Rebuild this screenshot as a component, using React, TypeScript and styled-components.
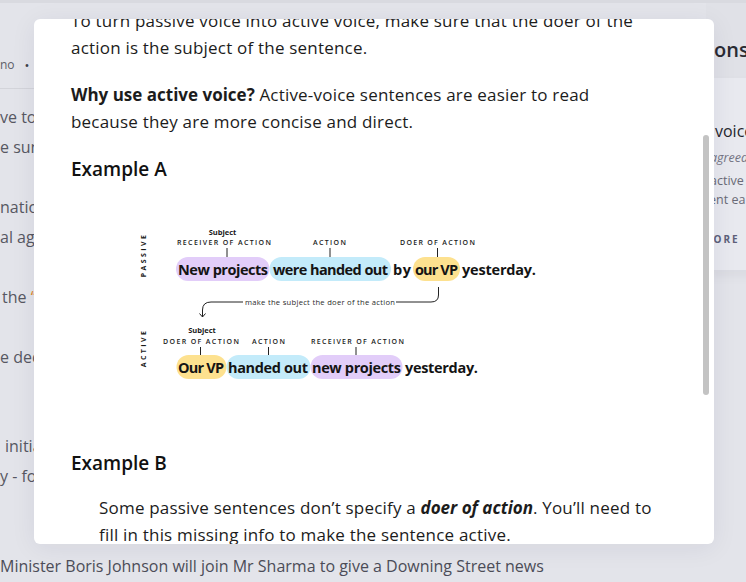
import React from "react";
import styled, { createGlobalStyle } from "styled-components";

const GlobalStyle = createGlobalStyle`
  html, body { margin: 0; padding: 0; }
  body {
    width: 746px;
    height: 582px;
    overflow: hidden;
    background: #e3e4ea;
    font-family: "Open Sans", "Liberation Sans", sans-serif;
  }
`;

const Page = styled.div`
  position: relative;
  width: 746px;
  height: 582px;
  overflow: hidden;
  box-sizing: border-box;
  border-top: 3px solid #d9dae0;
  display: grid;
  grid-template-columns: 706px 240px;
`;

/* ---------- background article ---------- */
const Article = styled.div`
  display: flex;
  flex-direction: column;
  min-width: 0;
  color: #575862;
`;

const MetaRow = styled.div`
  height: 86px;
  box-sizing: border-box;
  border-bottom: 1px solid #d3d4da;
  display: flex;
  align-items: flex-end;
  gap: 10px;
  padding-bottom: 15px;
  font-size: 12px;
  line-height: 16px;
  color: #5d5e68;
`;

const MetaDot = styled.span`
  font-size: 13px;
  color: #3f4049;
`;

const ArticleBody = styled.div`
  padding-top: 13px;
  font-size: 16px;
  line-height: 30px;
`;

const Para = styled.p<{ $gap: number }>`
  margin: ${(p) => p.$gap}px 0 0;
`;

const Line = styled.span<{ $indent?: number }>`
  display: block;
  white-space: nowrap;
  padding-left: ${(p) => p.$indent ?? 0}px;
`;

const Quote = styled.span`
  color: #e0892c;
`;

const BottomLine = styled.p`
  margin: 60px 0 0;
  white-space: nowrap;
  color: #4c4d58;
`;

/* ---------- background sidebar ---------- */
const Sidebar = styled.aside`
  display: flex;
  flex-direction: column;
`;

const SideHeader = styled.div`
  height: 75px;
  box-sizing: border-box;
  padding: 33px 0 0 8px;
  background: #e0e1e7;
  font-size: 20px;
  font-weight: 600;
  line-height: 27px;
  color: #2a2b33;
  white-space: nowrap;
`;

const SideCard = styled.div`
  height: 192px;
  box-sizing: border-box;
  padding-top: 42px;
  background: #e8e9ef;
  box-shadow: 0 6px 10px rgba(60, 62, 90, 0.06);
  display: flex;
  flex-direction: column;
`;

const SideItem = styled.div<{ $indent: number; $top: number }>`
  margin-top: ${(p) => p.$top}px;
  text-indent: ${(p) => p.$indent}px;
  white-space: nowrap;
  font-size: 12.5px;
  line-height: 18px;
  color: #6a6b77;
`;

const SideTitle = styled(SideItem)`
  font-size: 16px;
  line-height: 22px;
  font-weight: 500;
  color: #25262e;
`;

const SideNote = styled(SideItem)`
  font-style: italic;
  color: #737483;
`;

const SideMore = styled(SideItem)`
  font-size: 10px;
  font-weight: 700;
  letter-spacing: 2px;
  color: #5d607a;
`;

/* ---------- modal ---------- */
const Modal = styled.div`
  position: absolute;
  left: 34px;
  top: 16px;
  width: 680px;
  height: 525px;
  background: #ffffff;
  border-radius: 6px;
  overflow: hidden;
  box-shadow: 0 4px 26px rgba(30, 32, 70, 0.07);
`;

const ModalContent = styled.div`
  margin-top: -12px;
  padding: 0 56px 0 37px;
  color: #1c1c1c;
  font-size: 17px;
  line-height: 27px;
  letter-spacing: 0.2px;
`;

const Text = styled.p<{ $gap: number; $indent?: number }>`
  margin: ${(p) => p.$gap}px 0 0;
  padding-left: ${(p) => p.$indent ?? 0}px;
`;

const Strong = styled.strong`
  font-weight: 700;
  letter-spacing: 0;
`;

const StrongItalic = styled.strong`
  font-weight: 700;
  font-style: italic;
  letter-spacing: 0;
`;

const Heading = styled.h3<{ $gap: number }>`
  margin: ${(p) => p.$gap}px 0 0;
  font-size: 19px;
  line-height: 28px;
  font-weight: 600;
  letter-spacing: 0;
  color: #111;
`;

const Thumb = styled.div`
  position: absolute;
  right: 5px;
  top: 116px;
  width: 6px;
  height: 260px;
  border-radius: 3px;
  background: #c3c3c3;
`;

/* ---------- diagram ---------- */
const Diagram = styled.svg`
  display: block;
  margin-top: 7px;
  width: 606px;
  height: 240px;
  letter-spacing: 0;
`;

const SideLabel = styled.text`
  font-family: "Open Sans", "Liberation Sans", sans-serif;
  font-size: 7px;
  font-weight: 700;
  letter-spacing: 2.4px;
  fill: #1a1a1a;
`;

const RoleLabel = styled.text`
  font-family: "Open Sans", "Liberation Sans", sans-serif;
  font-size: 7px;
  font-weight: 600;
  letter-spacing: 1.1px;
  fill: #1a1a1a;
`;

const SubjectLabel = styled.text`
  font-family: "Open Sans", "Liberation Sans", sans-serif;
  font-size: 7.5px;
  font-weight: 700;
  fill: #1a1a1a;
`;

const Word = styled.text`
  font-family: "Open Sans", "Liberation Sans", sans-serif;
  font-size: 14.5px;
  font-weight: 700;
  fill: #141414;
`;

const Note = styled.text`
  font-family: "Open Sans", "Liberation Sans", sans-serif;
  font-size: 7.6px;
  font-weight: 400;
  fill: #2a2a2a;
`;

const PURPLE = "#e2cdf9";
const BLUE = "#c3ebfa";
const YELLOW = "#fde18f";

type Pill = { x1: number; x2: number; color: string };

const Pills = ({ y, pills }: { y: number; pills: Pill[] }) => (
  <>
    {pills.map((p, i) => (
      <rect key={i} x={p.x1} y={y} width={p.x2 - p.x1} height={24} rx={12} fill={p.color} />
    ))}
  </>
);

const Tick = ({ x, y1, y2 }: { x: number; y1: number; y2: number }) => (
  <line x1={x} y1={y1} x2={x} y2={y2} stroke="#222" strokeWidth={1} />
);

const VoiceDiagram = () => (
  <Diagram viewBox="71 190 606 240">
    {/* PASSIVE row */}
    <SideLabel transform="translate(145.5 255) rotate(-90)" textAnchor="middle">
      PASSIVE
    </SideLabel>
    <SubjectLabel x={222.5} y={234.5} textAnchor="middle">Subject</SubjectLabel>
    <RoleLabel x={177} y={244.5} textLength={95}>RECEIVER OF ACTION</RoleLabel>
    <RoleLabel x={313} y={244.5} textLength={34}>ACTION</RoleLabel>
    <RoleLabel x={400} y={244.5} textLength={76}>DOER OF ACTION</RoleLabel>
    <Tick x={227} y1={248} y2={257} />
    <Tick x={330} y1={248} y2={257} />
    <Tick x={437.5} y1={248} y2={257} />
    <Pills
      y={257}
      pills={[
        { x1: 176, x2: 269.5, color: PURPLE },
        { x1: 269.5, x2: 391, color: BLUE },
        { x1: 413, x2: 460, color: YELLOW },
      ]}
    />
    <Word x={178} y={274.5} textLength={90}>New projects</Word>
    <Word x={273} y={274.5} textLength={115}>were handed out</Word>
    <Word x={393} y={274.5} textLength={18}>by</Word>
    <Word x={415} y={274.5} textLength={43}>our VP</Word>
    <Word x={462} y={274.5} textLength={74}>yesterday.</Word>

    {/* connector */}
    <path
      d="M438.5 287 L438.5 295 Q438.5 302 431 302 L396 302 M243 302 L211 302 Q202.5 302 202.5 310 L202.5 317 M199.5 313.5 L202.5 317 L205.5 313.5"
      fill="none"
      stroke="#222"
      strokeWidth={1}
    />
    <Note x={245} y={304.6} textLength={150}>make the subject the doer of the action</Note>

    {/* ACTIVE row */}
    <SideLabel transform="translate(146 348) rotate(-90)" textAnchor="middle">
      ACTIVE
    </SideLabel>
    <SubjectLabel x={202} y={333} textAnchor="middle">Subject</SubjectLabel>
    <RoleLabel x={163} y={344} textLength={77}>DOER OF ACTION</RoleLabel>
    <RoleLabel x={252} y={344} textLength={34}>ACTION</RoleLabel>
    <RoleLabel x={311} y={344} textLength={94}>RECEIVER OF ACTION</RoleLabel>
    <Tick x={200.5} y1={347} y2={355} />
    <Tick x={268.5} y1={347} y2={355} />
    <Tick x={356} y1={347} y2={355} />
    <Pills
      y={355}
      pills={[
        { x1: 176.5, x2: 226.5, color: YELLOW },
        { x1: 226.5, x2: 310.5, color: BLUE },
        { x1: 310.5, x2: 402.5, color: PURPLE },
      ]}
    />
    <Word x={178} y={372.5} textLength={46}>Our VP</Word>
    <Word x={228} y={372.5} textLength={80}>handed out</Word>
    <Word x={312} y={372.5} textLength={89}>new projects</Word>
    <Word x={405} y={372.5} textLength={73}>yesterday.</Word>
  </Diagram>
);

export default function App() {
  return (
    <>
      <GlobalStyle />
      <Page>
        <Article>
          <MetaRow>
            <span>no</span>
            <MetaDot>•</MetaDot>
            <span>6 min read</span>
          </MetaRow>
          <ArticleBody>
            <Para $gap={0}>
              <Line>ve to wait until the end of the year for the</Line>
              <Line>e sunny summer holidays to be announced.</Line>
            </Para>
            <Para $gap={30}>
              <Line>national guidance was handed out by the</Line>
              <Line>al agency yesterday.</Line>
            </Para>
            <Para $gap={30}>
              <Line $indent={2}>
                the <Quote>“</Quote>new normal” will begin next week.
              </Line>
            </Para>
            <Para $gap={30}>
              <Line>e decision was made by the committee.</Line>
            </Para>
            <Para $gap={59}>
              <Line $indent={5}>initial plans were drawn up in spring</Line>
              <Line>y - for the first time this year.</Line>
            </Para>
            <BottomLine>
              Minister Boris Johnson will join Mr Sharma to give a Downing Street news
            </BottomLine>
          </ArticleBody>
        </Article>
        <Sidebar>
          <SideHeader>ons</SideHeader>
          <SideCard>
            <SideTitle $indent={9} $top={0}>voice</SideTitle>
            <SideNote $indent={4} $top={7}>agreed</SideNote>
            <SideItem $indent={4} $top={5}>active</SideItem>
            <SideItem $indent={3} $top={1}>ent ea</SideItem>
            <SideMore $indent={-4} $top={21}>MORE</SideMore>
          </SideCard>
        </Sidebar>

        <Modal>
          <ModalContent>
            <Text $gap={0}>
              To turn passive voice into active voice, make sure that the doer of the
              action is the subject of the sentence.
            </Text>
            <Text $gap={20}>
              <Strong>Why use active voice?</Strong> Active-voice sentences are easier to read
              because they are more concise and direct.
            </Text>
            <Heading $gap={20}>Example A</Heading>
            <VoiceDiagram />
            <Heading $gap={19}>Example B</Heading>
            <Text $gap={17} $indent={28}>
              Some passive sentences don’t specify a <StrongItalic>doer of action</StrongItalic>.
              You’ll need to fill in this missing info to make the sentence active.
            </Text>
          </ModalContent>
          <Thumb />
        </Modal>
      </Page>
    </>
  );
}
